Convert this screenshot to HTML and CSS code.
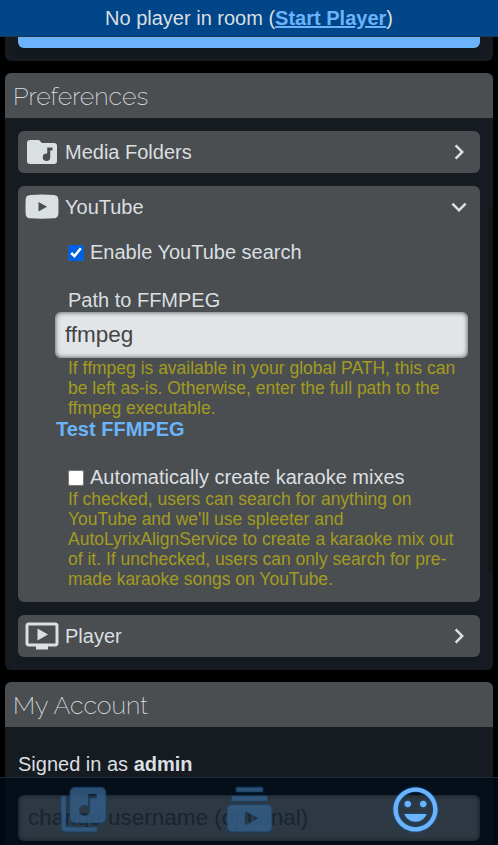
FILE: index.html
```html
<!DOCTYPE html>
<html lang="en">
<head>
<meta charset="utf-8">
<title>Account</title>
<link rel="stylesheet" href="styles.css">
</head>
<body>
<header class="status">No player in room (<a href="#">Start Player</a>)</header>
<main class="content">
  <section class="panel panel-tail"><button class="primary" aria-label="Submit"></button></section>

  <section class="panel">
    <h1 class="panel-title">Preferences</h1>
    <div class="panel-body">
      <div class="pref">
        <div class="pref-head">
          <svg class="icon" viewBox="0 0 24 24"><path d="M10 4l2 2h8a2 2 0 0 1 2 2v10a2 2 0 0 1-2 2H4a2 2 0 0 1-2-2V6c0-1.11.89-2 2-2h6m9 5h-3.5v4.06L15 13a2.5 2.5 0 1 0 2.5 2.5V11H19V9z"/></svg>
          <span class="pref-name">Media Folders</span>
          <svg class="chevron" viewBox="0 0 24 24"><path d="M10 6L8.59 7.41 13.17 12l-4.58 4.59L10 18l6-6z"/></svg>
        </div>
      </div>

      <div class="pref">
        <div class="pref-head">
          <svg class="icon" viewBox="0 0 36 36"><path fill-rule="evenodd" d="M6.500 6Q18 5.200 29.500 6C33 6.300 34.200 7.500 34.400 11Q34.600 18 34.400 24C34.200 27.800 33 29 29.500 29.300Q18 30 6.500 29.300C3 29 1.800 27.800 1.600 24Q1.400 18 1.600 11C1.800 7.500 3 6.300 6.500 6zM14.500 12.900V22.500L23 17.700z"/></svg>
          <span class="pref-name">YouTube</span>
          <svg class="chevron" viewBox="0 0 24 24"><path d="M16.59 8.59L12 13.17 7.41 8.59 6 10l6 6 6-6z"/></svg>
        </div>
        <div class="pref-content">
          <label class="check"><input type="checkbox" checked>Enable YouTube search</label>
          <label class="field-label" for="ffmpeg">Path to FFMPEG</label>
          <input class="text" id="ffmpeg" type="text" value="ffmpeg">
          <p class="hint">If ffmpeg is available in your global PATH, this can be left as-is. Otherwise, enter the full path to the ffmpeg executable.</p>
          <a class="test" href="#">Test FFMPEG</a>
          <label class="check mixes"><input type="checkbox">Automatically create karaoke mixes</label>
          <p class="hint">If checked, users can search for anything on YouTube and we'll use spleeter and AutoLyrixAlignService to create a karaoke mix out of it. If unchecked, users can only search for pre-made karaoke songs on YouTube.</p>
        </div>
      </div>

      <div class="pref">
        <div class="pref-head">
          <svg class="icon" viewBox="0 0 24 24"><path d="M21 3H3c-1.11 0-2 .89-2 2v12c0 1.1.89 2 2 2h5v2h8v-2h5c1.1 0 1.99-.9 1.99-2L23 5c0-1.1-.9-2-2-2zm0 14H3V5h18v12zm-5-6l-7 4V7z"/></svg>
          <span class="pref-name">Player</span>
          <svg class="chevron" viewBox="0 0 24 24"><path d="M10 6L8.59 7.41 13.17 12l-4.58 4.59L10 18l6-6z"/></svg>
        </div>
      </div>
    </div>
  </section>

  <section class="panel">
    <h1 class="panel-title">My Account</h1>
    <div class="panel-body account">
      <p class="signed">Signed in as <strong>admin</strong></p>
      <input class="text" type="text" placeholder="change username (optional)">
    </div>
  </section>
</main>
<div class="scroll-thumb"></div>
<nav class="tabs">
  <a class="tab" href="#" aria-label="Library"><svg viewBox="0 0 24 24"><path d="M20 2H8c-1.1 0-2 .9-2 2v12c0 1.1.9 2 2 2h12c1.1 0 2-.9 2-2V4c0-1.1-.9-2-2-2zm-2 5h-3v5.5c0 1.38-1.12 2.5-2.5 2.5S10 13.88 10 12.5s1.12-2.5 2.5-2.5c.57 0 1.08.19 1.5.51V5h4v2zM4 6H2v14c0 1.1.9 2 2 2h14v-2H4V6z"/></svg></a>
  <a class="tab" href="#" aria-label="Queue"><svg viewBox="0 0 24 24"><path d="M20 8H4V6h16v2zm-2-6H6v2h12V2zm4 10v8c0 1.1-.9 2-2 2H4c-1.1 0-2-.9-2-2v-8c0-1.1.9-2 2-2h16c1.1 0 2 .9 2 2zm-6 4l-6-3.27v6.53L16 16z"/></svg></a>
  <a class="tab active" href="#" aria-label="Account"><svg viewBox="0 0 24 24"><path d="M11.99 2C6.47 2 2 6.48 2 12s4.47 10 9.99 10C17.52 22 22 17.52 22 12S17.52 2 11.99 2zM12 20c-4.42 0-8-3.58-8-8s3.58-8 8-8 8 3.58 8 8-3.58 8-8 8zm3.5-9c.83 0 1.5-.67 1.5-1.5S16.33 8 15.5 8 14 8.67 14 9.5s.67 1.5 1.5 1.5zm-7 0c.83 0 1.5-.67 1.5-1.5S9.33 8 8.5 8 7 8.67 7 9.5 7.67 11 8.5 11zM7 14c.7 2.05 2.65 3.5 5 3.5s4.3-1.45 5-3.5z"/></svg></a>
</nav>
</body>
</html>
```

FILE: styles.css
```css
* { box-sizing: border-box; }

body {
  margin: 0;
  height: 845px;
  overflow: hidden;
  background: #000;
  color: #dadfe1;
  font: 20px/24px "Liberation Sans", Arial, sans-serif;
}

p, h1 { margin: 0; }

a { color: #6bb3fa; font-weight: bold; }

.status {
  height: 37px;
  padding-top: 6px;
  border-bottom: 1px solid #20364a;
  background: #004688;
  text-align: center;
}

.content {
  display: flex;
  flex-direction: column;
  gap: 12px;
  padding: 0 5px;
}

.panel {
  border-radius: 6px;
  background: #161a21;
  overflow: hidden;
}

.panel-tail {
  height: 24px;
  padding: 0 13px;
  border-radius: 0 0 6px 6px;
}

.primary {
  display: block;
  width: 100%;
  height: 11px;
  border: 0;
  border-radius: 0 0 6px 6px;
  background: #6bb3fa;
  box-shadow: 0 2px 8px #10181a;
}

.panel-title {
  height: 45px;
  padding: 0 8px;
  background: #4a4e50;
  font: 200 25px/47px Raleway, Lato, sans-serif;
}

.panel-body {
  display: flex;
  flex-direction: column;
  gap: 13px;
  padding: 13px;
}

.pref {
  border-radius: 6px;
  background: #4a4e50;
}

.pref-head {
  display: flex;
  align-items: center;
  height: 42px;
  padding: 0 6px 0 5.5px;
}

.icon { width: 36px; height: 36px; margin-top: -1px; fill: #dadfe1; }
.chevron { width: 30px; height: 30px; fill: #dadfe1; }
.pref-name { flex: 1; padding-left: 5.5px; }

.pref-content {
  padding: 12px 12px 13px 37px;
}

.check {
  display: flex;
  align-items: center;
  height: 24px;
  padding-left: 13px;
}

.check input {
  width: 16px;
  height: 16px;
  margin: 2px 6px 0 0;
  accent-color: #0060df;
}

.field-label {
  display: block;
  margin-top: 24px;
  padding-left: 13px;
}

.text {
  display: block;
  width: 100%;
  height: 46px;
  padding: 0 10px 1px;
  border: 0;
  border-radius: 6px;
  background: #e1e5e8;
  box-shadow: inset 0 0 5px #444;
  color: #444;
  font: 22.5px "Liberation Sans", Arial, sans-serif;
}

.text::placeholder { color: #7c828c; opacity: 1; }

.hint {
  padding: 0 0 0 13px;
  color: #a39b21;
  font-size: 17.5px;
  line-height: 20px;
}

.test {
  display: block;
  width: max-content;
  height: 23px;
  padding-left: 1px;
  line-height: 22px;
  text-decoration: none;
}

.mixes { margin-top: 24px; }

.account { gap: 19px; padding-top: 25px; }

.scroll-thumb {
  position: fixed;
  top: 208px;
  right: 5px;
  width: 5px;
  height: 364px;
  border-radius: 3px 0 0 3px;
  background: #12171a;
}

.tabs {
  position: fixed;
  inset: auto 0 0;
  display: flex;
  height: 68px;
  border-top: 1px solid #1b2935;
  background: rgba(0, 12, 24, .8);
}

.tab {
  flex: 1;
  display: flex;
  align-items: center;
  justify-content: center;
  padding: 0 0 4px 1px;
}

.tab svg {
  width: 53px;
  height: 53px;
  fill: #315a81;
  filter: drop-shadow(0 0 1px #004c90);
  opacity: .88;
}

.tab.active svg {
  fill: #6bb3fa;
  filter: drop-shadow(0 0 1px #0064c8);
  opacity: 1;
}
```
